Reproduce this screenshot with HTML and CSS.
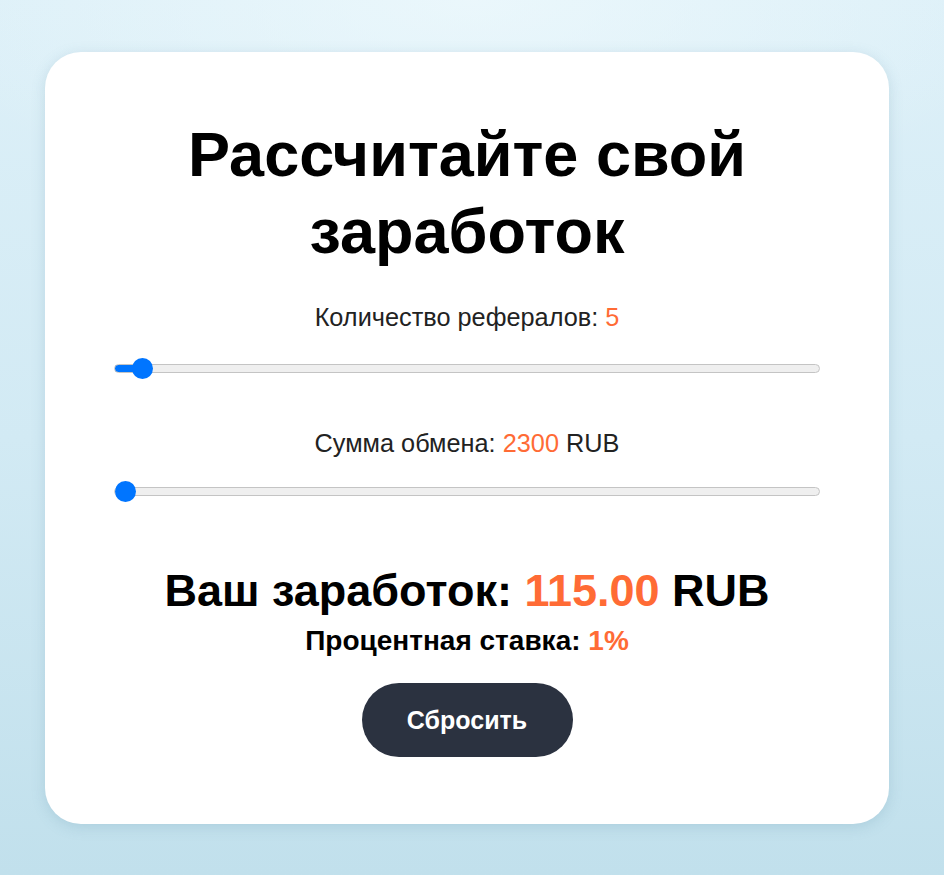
FILE: index.html
```html
<!DOCTYPE html>
<html lang="ru">
<head>
<meta charset="utf-8">
<title>Калькулятор заработка</title>
<link rel="stylesheet" href="styles.css">
</head>
<body>
<main class="page">
  <section class="card">
    <h1 class="title">Рассчитайте свой заработок</h1>
    <div class="field field-first">
      <label class="label" for="refs">Количество рефералов: <span class="accent">5</span></label>
      <input class="range" id="refs" type="range" min="1" max="160" value="5" style="--fill: 3.8%">
    </div>
    <div class="field field-second">
      <label class="label" for="sum">Сумма обмена: <span class="accent">2300</span> RUB</label>
      <input class="range" id="sum" type="range" min="2300" max="100000" value="2300" style="--fill: 0%">
    </div>
    <div class="result">
      <p class="earn">Ваш заработок: <span class="accent">115.00</span> RUB</p>
      <p class="rate">Процентная ставка: <span class="accent">1%</span></p>
    </div>
    <button class="reset" type="button">Сбросить</button>
  </section>
</main>
</body>
</html>
```
FILE: styles.css
```css
html, body {
  margin: 0;
  padding: 0;
}
body {
  min-height: 875px;
  font-family: "Liberation Sans", Arial, sans-serif;
  background:
    radial-gradient(ellipse 60% 25% at 50% 0%, rgba(240, 250, 253, 0.7), rgba(240, 250, 253, 0) 100%),
    linear-gradient(180deg, #ddf0f8 0%, #d2eaf4 50%, #c1e0ec 100%);
  color: #000;
}
.page {
  display: flex;
  justify-content: center;
  padding: 52px 10px 0 0;
}
.card {
  width: 844px;
  box-sizing: border-box;
  background: #fff;
  border-radius: 36px;
  box-shadow: 0 3px 14px rgba(90, 140, 165, 0.22);
  padding: 64px 68px 67px;
  display: flex;
  flex-direction: column;
  align-items: center;
  text-align: center;
}
.title {
  margin: 0;
  font-size: 63px;
  line-height: 77px;
  font-weight: 700;
  width: 640px;
}
.field {
  width: 100%;
  display: flex;
  flex-direction: column;
  align-items: center;
}
.field-first {
  margin-top: 32px;
}
.field-second {
  margin-top: 49px;
}
.label {
  font-size: 25.3px;
  line-height: 30px;
  color: #222;
}
.accent {
  color: #ff6b35;
}
.range {
  -webkit-appearance: none;
  appearance: none;
  width: 706px;
  height: 22px;
  margin: 25px 0 0;
  background: transparent;
  --fill: 0%;
}
.field-second .range {
  margin-top: 22px;
}
.range::-webkit-slider-runnable-track {
  height: 9px;
  box-sizing: border-box;
  border-radius: 5px;
  border: 1px solid #c4c4c4;
  background: linear-gradient(90deg, #0075ff 0, #0075ff var(--fill), #efefef var(--fill), #efefef 100%);
}
.range::-webkit-slider-thumb {
  -webkit-appearance: none;
  appearance: none;
  width: 21px;
  height: 21px;
  margin-top: -7px;
  border-radius: 50%;
  background: #0075ff;
  border: none;
}
.result {
  margin-top: 63px;
}
.earn {
  margin: 0;
  font-size: 45px;
  line-height: 52px;
  font-weight: 700;
}
.rate {
  margin: 8px 0 0;
  font-size: 28px;
  line-height: 32px;
  font-weight: 700;
}
.reset {
  margin-top: 26px;
  width: 211px;
  height: 74px;
  border: none;
  border-radius: 37px;
  background: #2b3240;
  color: #fff;
  font-family: "Liberation Sans", Arial, sans-serif;
  font-size: 25px;
  font-weight: 700;
  cursor: pointer;
}
```
